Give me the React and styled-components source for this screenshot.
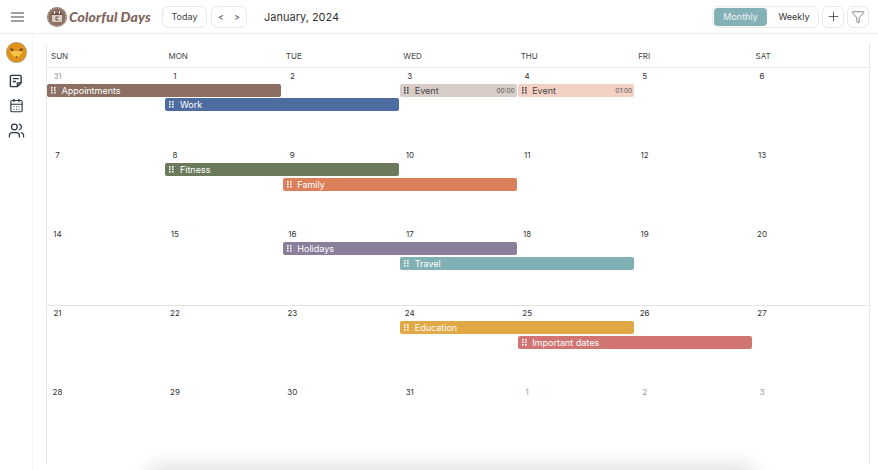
import styled, { createGlobalStyle } from "styled-components";
import { CalendarDays, Filter, Plus, Users } from "lucide-react";

const GlobalStyle = createGlobalStyle`
  html, body {
    margin: 0;
    height: 100%;
    background: #fff;
    overflow: hidden;
  }
  body {
    font-family: "Inter", "Noto Sans", sans-serif;
    color: #333;
  }
`;

const Page = styled.div`
  width: 878px;
  height: 470px;
  display: flex;
  flex-direction: column;
  position: relative;
  overflow: hidden;
`;

const TopBar = styled.header`
  height: 33px;
  flex: none;
  display: flex;
  align-items: center;
  padding: 0 9px 0 11px;
  border-bottom: 1px solid #ececec;
`;

const MenuIcon = styled.svg`
  width: 13px;
  height: 10px;
  margin-right: 23px;
  color: #444;
`;

const Logo = styled.div`
  display: flex;
  align-items: center;
  gap: 2px;
  width: 115px;
`;

const LogoText = styled.span`
  font-family: "Lato", sans-serif;
  font-style: italic;
  font-weight: 900;
  font-size: 14px;
  letter-spacing: 0.15px;
  color: #7f645b;
  white-space: nowrap;
`;

const Button = styled.button`
  height: 22px;
  padding: 0;
  width: ${({ $width }) => $width}px;
  margin-left: ${({ $gap }) => $gap || 0}px;
  display: flex;
  align-items: center;
  justify-content: center;
  gap: 10px;
  border: 1px solid #e8e8e8;
  border-radius: 6px;
  background: #fff;
  font: inherit;
  font-size: 9px;
  color: #444;
`;

const MonthTitle = styled.h1`
  margin: 0 0 0 17px;
  font-size: 11px;
  font-weight: 400;
  color: #333;
`;

const Spacer = styled.div`
  flex: 1;
`;

const ViewSwitch = styled.div`
  width: 107px;
  height: 22px;
  box-sizing: border-box;
  padding: 1px;
  display: flex;
  align-items: center;
  border: 1px solid #ececec;
  border-radius: 6px;
`;

const ViewOption = styled.div`
  height: 18px;
  flex: none;
  width: ${({ $active }) => ($active ? 53 : 50)}px;
  display: flex;
  align-items: center;
  justify-content: center;
  padding-left: ${({ $active }) => ($active ? 0 : 2)}px;
  border-radius: 4px;
  font-size: 9px;
  background: ${({ $active }) => ($active ? "#84b1b5" : "transparent")};
  color: ${({ $active }) => ($active ? "#eef5f5" : "#333")};
`;

const Body = styled.div`
  flex: 1;
  display: flex;
  min-height: 0;
`;

const SideBar = styled.nav`
  width: 32px;
  flex: none;
  display: flex;
  flex-direction: column;
  align-items: center;
  padding-top: 8px;
  border-right: 1px solid #f5f5f5;
  color: #2f3640;
`;

const SideItem = styled.div`
  height: 25px;
  display: flex;
  align-items: center;
  justify-content: center;
`;

const AvatarItem = styled(SideItem)`
  height: 21px;
  margin-bottom: 5px;
`;

const Calendar = styled.main`
  width: 824px;
  height: 419px;
  box-sizing: border-box;
  margin: 11px 0 0 13px;
  border-left: 1px solid #e8e8e8;
  border-right: 1px solid #e8e8e8;
`;

const DayHeader = styled.div`
  height: 23px;
  box-sizing: border-box;
  display: grid;
  grid-template-columns: repeat(7, 1fr);
  align-items: center;
  border-bottom: 1px solid #e8e8e8;
`;

const DayName = styled.div`
  padding-left: 4px;
  font-size: 8px;
  color: #444;
`;

const Week = styled.section`
  height: 79px;
  box-sizing: border-box;
  display: grid;
  grid-template-columns: repeat(7, 1fr);
  grid-template-rows: 16px ${({ $tight }) => ($tight ? "14px" : "15px")} 15px;
  align-content: start;
  box-shadow: ${({ $ruled }) => ($ruled ? "inset 0 1px 0 #e4e4e4" : "none")};
`;

const DateCell = styled.div`
  grid-row: 1;
  padding: 1px 0 0 5px;
  line-height: 15px;
  font-size: 8px;
  color: ${({ $muted }) => ($muted ? "#999" : "#333")};
`;

const DateNumber = styled.span`
  display: inline-block;
  min-width: 11px;
  text-align: center;
`;

const EventBar = styled.div`
  grid-column: ${({ $start, $span }) => `${$start} / span ${$span}`};
  grid-row: ${({ $row }) => $row + 1};
  height: 13px;
  margin-left: ${({ $start }) => ($start > 1 ? 1 : 0)}px;
  margin-right: ${({ $start }) => ($start > 1 ? 0 : 1)}px;
  display: flex;
  align-items: center;
  padding: 0 2px 0 4px;
  border-radius: 2px;
  background: ${({ $color }) => $color};
  color: ${({ $dark }) => ($dark ? "#444" : "#fff")};
  font-size: 9px;
  white-space: nowrap;
`;

const Grip = styled.svg`
  width: 5px;
  height: 7px;
  margin-right: 5.5px;
  flex: none;
`;

const EventTime = styled.span`
  margin-left: auto;
  font-size: 6.5px;
  color: #555;
`;

const BottomShadow = styled.div`
  position: absolute;
  left: 160px;
  right: 135px;
  top: 478px;
  height: 10px;
  box-shadow: 0 0 22px 10px rgba(0, 0, 0, 0.16);
`;

const weekDays = ["SUN", "MON", "TUE", "WED", "THU", "FRI", "SAT"];

const weeks = [
  {
    dates: [31, 1, 2, 3, 4, 5, 6],
    muted: [0],
    tight: true,
    events: [
      { label: "Appointments", start: 1, span: 2, row: 1, color: "#8d6e63" },
      { label: "Event", time: "00:00", start: 4, span: 1, row: 1, color: "#d7ccc8", dark: true },
      { label: "Event", time: "01:00", start: 5, span: 1, row: 1, color: "#f2d1c4", dark: true },
      { label: "Work", start: 2, span: 2, row: 2, color: "#4e6c9f" },
    ],
  },
  {
    dates: [7, 8, 9, 10, 11, 12, 13],
    events: [
      { label: "Fitness", start: 2, span: 2, row: 1, color: "#6b7a5c" },
      { label: "Family", start: 3, span: 2, row: 2, color: "#dc7f5b" },
    ],
  },
  {
    dates: [14, 15, 16, 17, 18, 19, 20],
    events: [
      { label: "Holidays", start: 3, span: 2, row: 1, color: "#8b7e9b" },
      { label: "Travel", start: 4, span: 2, row: 2, color: "#80b0b3" },
    ],
  },
  {
    dates: [21, 22, 23, 24, 25, 26, 27],
    ruled: true,
    events: [
      { label: "Education", start: 4, span: 2, row: 1, color: "#e0a945" },
      { label: "Important dates", start: 5, span: 2, row: 2, color: "#d07572" },
    ],
  },
  {
    dates: [28, 29, 30, 31, 1, 2, 3],
    muted: [4, 5, 6],
    events: [],
  },
];

function GripDots({ dark }) {
  const dots = [];
  for (let y = 0; y < 3; y++) {
    for (let x = 0; x < 2; x++) {
      dots.push(<rect key={`${x}${y}`} x={x * 3} y={y * 2.5} width="1.6" height="1.6" />);
    }
  }
  return (
    <Grip viewBox="0 0 5 7" fill={dark ? "#444" : "#fff"}>
      {dots}
    </Grip>
  );
}

function LogoMark() {
  return (
    <svg width="20" height="20" viewBox="0 0 20 20">
      <circle cx="10" cy="10" r="10" fill="#8d6e63" />
      <circle cx="10" cy="10" r="9" fill="none" stroke="#d7ccc8" strokeWidth="1" strokeDasharray="1.2 1.2" />
      <rect x="5" y="5.5" width="10" height="9.5" rx="1" fill="#d7ccc8" />
      <rect x="5" y="5.5" width="10" height="2.5" fill="#6d4c41" />
      <rect x="7" y="4" width="1" height="3" fill="#f5eeeb" />
      <rect x="12" y="4" width="1" height="3" fill="#f5eeeb" />
      <path d="M11.5 10 H9 V13 H11.5" fill="none" stroke="#6d4c41" strokeWidth="1" />
    </svg>
  );
}

function Avatar() {
  return (
    <svg width="21" height="21" viewBox="0 0 21 21">
      <circle cx="10.5" cy="10.5" r="10.2" fill="#e0921c" stroke="#8fa3a8" strokeWidth="0.6" />
      <path d="M4 6 L8 9 H13 L17 6 L15.5 12 L10.5 17 L5.5 12 Z" fill="#f6c445" />
      <path d="M4 6 L7 7 L8 9 L5 9 Z M17 6 L14 7 L13 9 L16 9 Z" fill="#6b4312" />
      <path d="M9 14.5 H12 L10.5 16.5 Z" fill="#6b4312" />
    </svg>
  );
}

function NoteIcon() {
  return (
    <svg width="14" height="14" viewBox="0 0 15 15" fill="none" stroke="currentColor" strokeWidth="1.5">
      <path d="M2.5 1.5 H12 Q13 1.5 13 2.5 V9.5 L9 13.5 H2.5 Q1.5 13.5 1.5 12.5 V2.5 Q1.5 1.5 2.5 1.5 Z" />
      <path d="M13 9.5 H9 V13.5" />
      <path d="M4 5 H10.5 M4 8 H7.5" />
    </svg>
  );
}

export default function App() {
  return (
    <Page>
      <GlobalStyle />
      <TopBar>
        <MenuIcon viewBox="0 0 13 10" stroke="currentColor" strokeWidth="1.2">
          <path d="M0 1 H13 M0 5 H13 M0 9 H13" />
        </MenuIcon>
        <Logo>
          <LogoMark />
          <LogoText>Colorful Days</LogoText>
        </Logo>
        <Button $width={45}>Today</Button>
        <Button $width={36} $gap={4}>
          <span>&lt;</span>
          <span>&gt;</span>
        </Button>
        <MonthTitle>January, 2024</MonthTitle>
        <Spacer />
        <ViewSwitch>
          <ViewOption $active>Monthly</ViewOption>
          <ViewOption>Weekly</ViewOption>
        </ViewSwitch>
        <Button $width={22} $gap={3}>
          <Plus size={15} strokeWidth={1.3} />
        </Button>
        <Button $width={22} $gap={3}>
          <Filter size={14} strokeWidth={1.1} />
        </Button>
      </TopBar>
      <Body>
        <SideBar>
          <AvatarItem>
            <Avatar />
          </AvatarItem>
          <SideItem>
            <NoteIcon />
          </SideItem>
          <SideItem>
            <CalendarDays size={15} strokeWidth={1.8} />
          </SideItem>
          <SideItem>
            <Users size={17} strokeWidth={1.8} />
          </SideItem>
        </SideBar>
        <Calendar>
          <DayHeader>
            {weekDays.map((day) => (
              <DayName key={day}>{day}</DayName>
            ))}
          </DayHeader>
          {weeks.map((week) => (
            <Week key={week.dates[0]} $ruled={week.ruled} $tight={week.tight}>
              {week.dates.map((date, i) => (
                <DateCell key={i} $muted={week.muted?.includes(i)}>
                  <DateNumber>{date}</DateNumber>
                </DateCell>
              ))}
              {week.events.map((event) => (
                <EventBar
                  key={event.label + event.start}
                  $start={event.start}
                  $span={event.span}
                  $row={event.row}
                  $color={event.color}
                  $dark={event.dark}
                >
                  <GripDots dark={event.dark} />
                  {event.label}
                  {event.time && <EventTime>{event.time}</EventTime>}
                </EventBar>
              ))}
            </Week>
          ))}
        </Calendar>
      </Body>
      <BottomShadow />
    </Page>
  );
}
